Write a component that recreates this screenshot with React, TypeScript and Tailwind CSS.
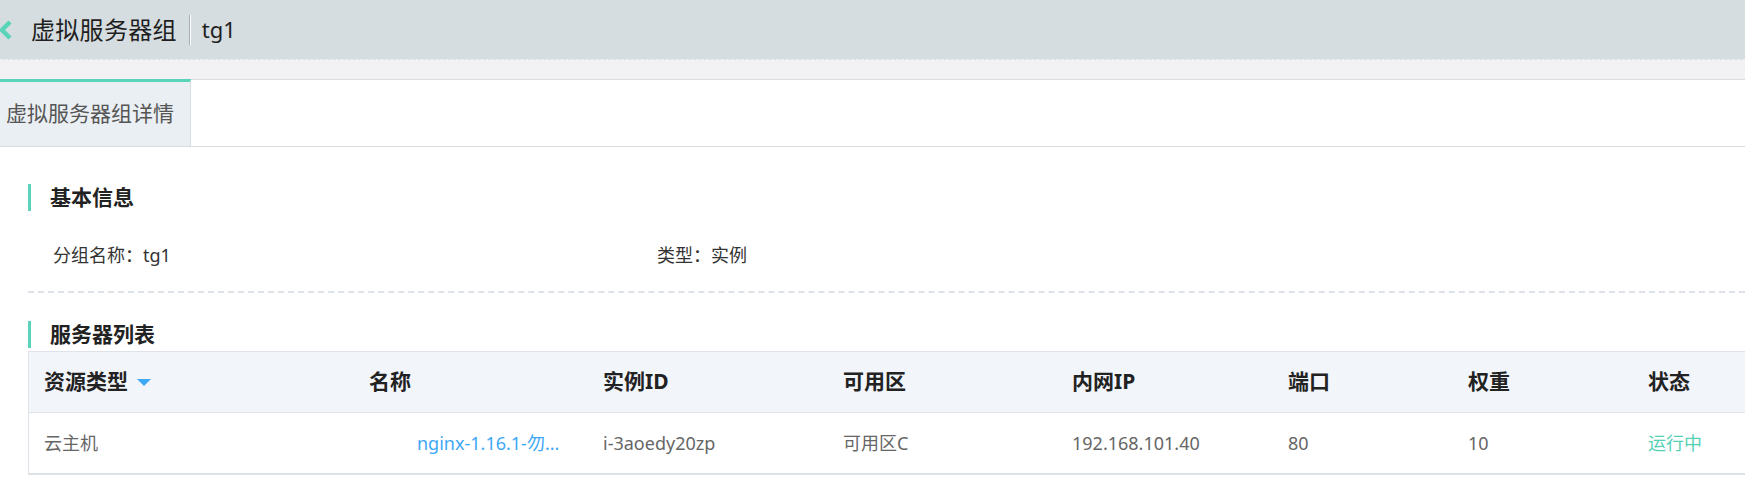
import type { FC } from "react";

const font = { fontFamily: '"Noto Sans", "Noto Sans CJK SC", sans-serif' };

interface Member {
  type: string;
  name: string;
  instanceId: string;
  zone: string;
  ip: string;
  port: number;
  weight: number;
  status: string;
}

const members: Member[] = [
  {
    type: "云主机",
    name: "nginx-1.16.1-勿...",
    instanceId: "i-3aoedy20zp",
    zone: "可用区C",
    ip: "192.168.101.40",
    port: 80,
    weight: 10,
    status: "运行中",
  },
];

const cols = "grid grid-cols-[325px_234px_240px_229px_216px_180px_180px_1fr]";

const SectionTitle: FC<{ title: string }> = ({ title }) => (
  <div className="flex items-center h-[27px] border-l-[3px] border-[#5ad4b8] pl-[19px]">
    <h2 className="text-[21px] font-bold text-[#222]">{title}</h2>
  </div>
);

const App: FC = () => {
  return (
    <div className="min-h-screen bg-white" style={font}>
      {/* Header */}
      <div className="h-[60px] bg-[#d5dde0] border-b border-dashed border-[#eef1f2] flex items-center">
        <svg width="16" height="22" viewBox="0 0 16 22" className="ml-[-2px] mr-[17px]">
          <polyline points="12,3 4,11 12,19" fill="none" stroke="#5ad4b8" strokeWidth="4.5" />
        </svg>
        <span className="text-[24px] tracking-[0.3px] text-[#1f1f1f]">虚拟服务器组</span>
        <span className="ml-[12px] h-[30px] w-[2px] border-l border-[#a9b0b4] bg-white" />
        <span className="ml-[11px] text-[22px] text-[#1f1f1f]">tg1</span>
      </div>
      <div className="h-[19px] bg-[#f2f2f4]" />

      {/* Tabs */}
      <div className="flex h-[68px] border-t border-b border-[#d8dde2]">
        <div className="w-[191px] -mt-px bg-[#eaeff3] border-t-[3px] border-[#5ad4b8] border-r border-r-[#d8dde2] flex items-center pl-[6px]">
          <span className="text-[21px] text-[#555]">虚拟服务器组详情</span>
        </div>
      </div>

      {/* Content */}
      <div className="pl-[28px]">
        <div className="mt-[37px]">
          <SectionTitle title="基本信息" />
        </div>
        <div className="mt-[32px] h-[24px] flex items-center text-[18px] text-[#333]">
          <span className="pl-[25px] w-[629px]">分组名称：tg1</span>
          <span>类型：实例</span>
        </div>
        <div className="mt-[24px] border-t-2 border-dashed border-[#dde2e8]" />

        <div className="mt-[28px]">
          <SectionTitle title="服务器列表" />
        </div>

        <div className="mt-[3px] border-l border-t border-[#dde3e8] border-b-2 border-b-[#dde2e6]">
          <div className={`${cols} h-[61px] items-center bg-[#f2f5fa] border-b border-[#dde3e8] text-[21px] font-bold text-[#222]`}>
            <div className="pl-[15px] flex items-center">
              资源类型
              <svg width="14" height="8" viewBox="0 0 14 8" className="ml-[9px] mt-[2px]">
                <polygon points="0,0 14,0 7,7" fill="#3ea8f5" />
              </svg>
            </div>
            <div className="pl-[15px]">名称</div>
            <div className="pl-[15px]">实例ID</div>
            <div className="pl-[15px]">可用区</div>
            <div className="pl-[15px]">内网IP</div>
            <div className="pl-[15px]">端口</div>
            <div className="pl-[15px]">权重</div>
            <div className="pl-[15px]">状态</div>
          </div>
          {members.map((m) => (
            <div key={m.instanceId} className={`${cols} h-[60px] items-center text-[18px] text-[#666]`}>
              <div className="pl-[15px]">{m.type}</div>
              <div className="pl-[63px] text-[#3ea8f5]">{m.name}</div>
              <div className="pl-[15px]">{m.instanceId}</div>
              <div className="pl-[15px]">{m.zone}</div>
              <div className="pl-[15px]">{m.ip}</div>
              <div className="pl-[15px]">{m.port}</div>
              <div className="pl-[15px]">{m.weight}</div>
              <div className="pl-[15px] text-[#55d0b5]">{m.status}</div>
            </div>
          ))}
        </div>
      </div>
    </div>
  );
};

export default App;
